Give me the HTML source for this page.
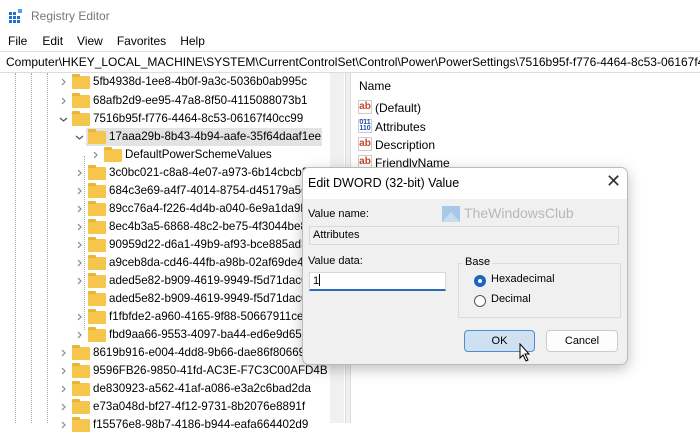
<!DOCTYPE html>
<html><head><style>
*{margin:0;padding:0;box-sizing:border-box}
body{width:700px;height:423px;overflow:hidden;background:#fff;font-family:"Liberation Sans",sans-serif;font-size:12px;color:#000;position:relative}
.abs{position:absolute}
.row{position:absolute;height:18px;line-height:18px;white-space:nowrap}
.fold{position:absolute;top:3px;width:18px;height:13px;background:#f6c64c;border-radius:1px}
.fold:before{content:"";position:absolute;left:0;top:-2px;width:8px;height:3px;background:#e8b43a;border-radius:1px 1px 0 0}
.chev{position:absolute;top:0;color:#777;font-size:11px}
.vr{position:absolute;border-left:1px dotted #aaa}
</style></head><body>
<div class="abs" style="left:0;top:0;width:700px;height:32px;background:#fff"></div>
<svg class="abs" style="left:9px;top:9px" width="14" height="14"><rect x="0" y="3" width="3" height="3" fill="#1f6fd1"/><rect x="4" y="3" width="3" height="3" fill="#1f6fd1"/><rect x="0" y="7" width="3" height="3" fill="#1f6fd1"/><rect x="4" y="7" width="3" height="3" fill="#1f6fd1"/><rect x="8" y="7" width="3" height="3" fill="#1f6fd1"/><rect x="0" y="11" width="3" height="3" fill="#1f6fd1"/><rect x="4" y="11" width="3" height="3" fill="#1f6fd1"/><rect x="8" y="11" width="3" height="3" fill="#1f6fd1"/><rect x="9" y="0" width="4" height="4" fill="#4aa3f0"/></svg>
<div class="abs" style="left:31px;top:9px;color:#777;font-size:12px">Registry Editor</div>
<div class="abs" style="left:8px;top:34px;font-size:12px"><span>File</span><span style="margin-left:15px">Edit</span><span style="margin-left:14px">View</span><span style="margin-left:14px">Favorites</span><span style="margin-left:14px">Help</span></div>
<div class="abs" style="left:0;top:51px;width:700px;height:22px;border-top:1px solid #ddd;border-bottom:1px solid #ddd;line-height:20px;padding-left:6px;white-space:nowrap;overflow:hidden;font-size:12px">Computer\HKEY_LOCAL_MACHINE\SYSTEM\CurrentControlSet\Control\Power\PowerSettings\7516b95f-f776-4464-8c53-06167f40cc99\17aaa29b</div>
<div class="abs" style="left:0;top:73px;width:345px;height:350px;background:#fff;overflow:hidden">
<div class="vr" style="left:15px;top:0;height:350px"></div>
<div class="vr" style="left:31px;top:0;height:350px"></div>
<div class="vr" style="left:47px;top:0;height:350px"></div>
<div class="vr" style="left:84px;top:83px;height:174px"></div>
<div class="abs" style="left:86px;top:55px;width:236px;height:18px;background:#e3e3e3"></div>
</div>
<div class="abs" style="left:330px;top:73px;width:14px;height:350px;background:#f0f0f0"></div>
<div class="abs" style="left:345px;top:73px;width:6px;height:350px;background:#f0f0f0;border-left:1px solid #ddd;border-right:1px solid #ddd"></div>
<div id="tree" style="font-size:11.6px"></div>
<div class="abs" style="left:359px;top:79px">Name</div>
<div id="vals"></div>
<div class="abs" style="left:302px;top:167px;width:326px;height:198px;background:#f0f0f0;border:1px solid #bbb;border-radius:7px;box-shadow:0 4px 14px rgba(0,0,0,.25);overflow:hidden">
 <div class="abs" style="left:0;top:0;width:326px;height:31px;background:#fff"></div>
 <div class="abs" style="left:5px;top:8px;font-size:12.5px">Edit DWORD (32-bit) Value</div>
 <div class="abs" style="left:303px;top:3px;font-size:18px;color:#333">✕</div>
 <div class="abs" style="left:5px;top:40px;font-size:11px">Value name:</div>
 <svg class="abs" style="left:139px;top:38px" width="18" height="16"><rect width="18" height="16" fill="#a8c8e8"/><path d="M0 16 L9 6 L18 16Z" fill="#c9dcee"/></svg>
 <div class="abs" style="left:161px;top:37px;font-size:14px;color:#b8b8b8">TheWindowsClub</div>
 <div class="abs" style="left:6px;top:58px;width:310px;height:19px;background:#f0f0f0;border:1px solid #d8d8d8;font-size:11px;line-height:17px;padding-left:3px">Attributes</div>
 <div class="abs" style="left:5px;top:87px;font-size:11px">Value data:</div>
 <div class="abs" style="left:6px;top:104px;width:137px;height:19px;background:#fff;border:1px solid #d8d8d8;border-bottom:2px solid #2a6db5;font-size:11px;line-height:17px;padding-left:3px">1<span style="display:inline-block;width:1px;height:12px;background:#000;vertical-align:-2px"></span></div>
 <div class="abs" style="left:155px;top:95px;width:163px;height:55px;border:1px solid #dcdcdc"></div>
 <div class="abs" style="left:160px;top:88px;background:#f0f0f0;padding:0 2px;font-size:11px">Base</div>
 <div class="abs" style="left:171px;top:107px;width:12px;height:12px;border-radius:50%;background:#1a66c2"><div style="position:absolute;left:4px;top:4px;width:4px;height:4px;border-radius:50%;background:#fff"></div></div>
 <div class="abs" style="left:188px;top:105px;font-size:11px">Hexadecimal</div>
 <div class="abs" style="left:171px;top:127px;width:12px;height:12px;border-radius:50%;border:1px solid #555;background:#fff"></div>
 <div class="abs" style="left:188px;top:125px;font-size:11px">Decimal</div>
 <div class="abs" style="left:161px;top:162px;width:71px;height:22px;background:#cfe0f1;border:1px solid #4a8fd6;border-radius:4px;text-align:center;line-height:20px;font-size:11px">OK</div>
 <div class="abs" style="left:243px;top:162px;width:72px;height:22px;background:#fdfdfd;border:1px solid #ccc;border-radius:4px;text-align:center;line-height:20px;font-size:11px">Cancel</div>
 <svg class="abs" style="left:216px;top:175px" width="12" height="20"><path d="M1 1 L1 15 L4 12 L7 18 L9 17 L6 11 L10 11Z" fill="#fff" stroke="#000" stroke-width="1"/></svg>
</div>
<script>
var rows=[
[1,82,"5fb4938d-1ee8-4b0f-9a3c-5036b0ab995c",">"],
[1,101,"68afb2d9-ee95-47a8-8f50-4115088073b1",">"],
[1,119,"7516b95f-f776-4464-8c53-06167f40cc99","v"],
[2,137,"17aaa29b-8b43-4b94-aafe-35f64daaf1ee","v"],
[3,155,"DefaultPowerSchemeValues",">"],
[2,173,"3c0bc021-c8a8-4e07-a973-6b14cbcb2b7e",">"],
[2,191,"684c3e69-a4f7-4014-8754-d45179a56167",">"],
[2,209,"89cc76a4-f226-4d4b-a040-6e9a1da9b882",">"],
[2,227,"8ec4b3a5-6868-48c2-be75-4f3044be88a7",">"],
[2,245,"90959d22-d6a1-49b9-af93-bce885ad335b",">"],
[2,263,"a9ceb8da-cd46-44fb-a98b-02af69de4623",">"],
[2,281,"aded5e82-b909-4619-9949-f5d71dac0bcb",">"],
[2,299,"aded5e82-b909-4619-9949-f5d71dac0bcc",""],
[2,317,"f1fbfde2-a960-4165-9f88-50667911ce96",">"],
[2,335,"fbd9aa66-9553-4097-ba44-ed6e9d65eab8",">"],
[1,353,"8619b916-e004-4dd8-9b66-dae86f806698",">"],
[1,371,"9596FB26-9850-41fd-AC3E-F7C3C00AFD4B",">"],
[1,389,"de830923-a562-41af-a086-e3a2c6bad2da",">"],
[1,407,"e73a048d-bf27-4f12-9731-8b2076e8891f",">"],
[1,425,"f15576e8-98b7-4186-b944-eafa664402d9",">"]];
var h="";
rows.forEach(function(r){var x=[0,72,88,104][r[0]];var y=r[1]-9;
h+='<div class="row" style="left:0;top:'+y+'px;width:330px;overflow:hidden">';
if(r[3]==">")h+='<div class="chev" style="left:'+(x-11)+'px"><svg width="6" height="18"><path d="M1 6 L4 9 L1 12" fill="none" stroke="#888" stroke-width="1.2"/></svg></div>';
if(r[3]=="v")h+='<div class="chev" style="left:'+(x-13)+'px"><svg width="9" height="18"><path d="M1 8 L4.5 11 L8 8" fill="none" stroke="#555" stroke-width="1.2"/></svg></div>';
h+='<div class="fold" style="left:'+x+'px"></div><div style="position:absolute;left:'+(x+21)+'px;top:0">'+r[2]+'</div></div>';});
document.getElementById("tree").innerHTML=h;
var v=[["ab","(Default)",108],["01","Attributes",127],["ab","Description",145],["ab","FriendlyName",163]];h="";
v.forEach(function(a){var ic=a[0]=="ab"?'<div style="position:absolute;left:0;top:1px;width:14px;height:14px;border:1px solid #ccc;color:#c8452a;font-weight:bold;font-size:10px;line-height:12px;text-align:center">ab</div>':'<div style="position:absolute;left:0;top:1px;width:14px;height:14px;border:1px solid #ccc;color:#1f4fb8;font-weight:bold;font-size:7px;line-height:6px;text-align:center">011<br>110</div>';
h+='<div class="row" style="left:358px;top:'+(a[2]-9)+'px;width:300px">'+ic+'<div style="position:absolute;left:17px;top:0">'+a[1]+'</div></div>';});
document.getElementById("vals").innerHTML=h;
</script>
</body></html>
